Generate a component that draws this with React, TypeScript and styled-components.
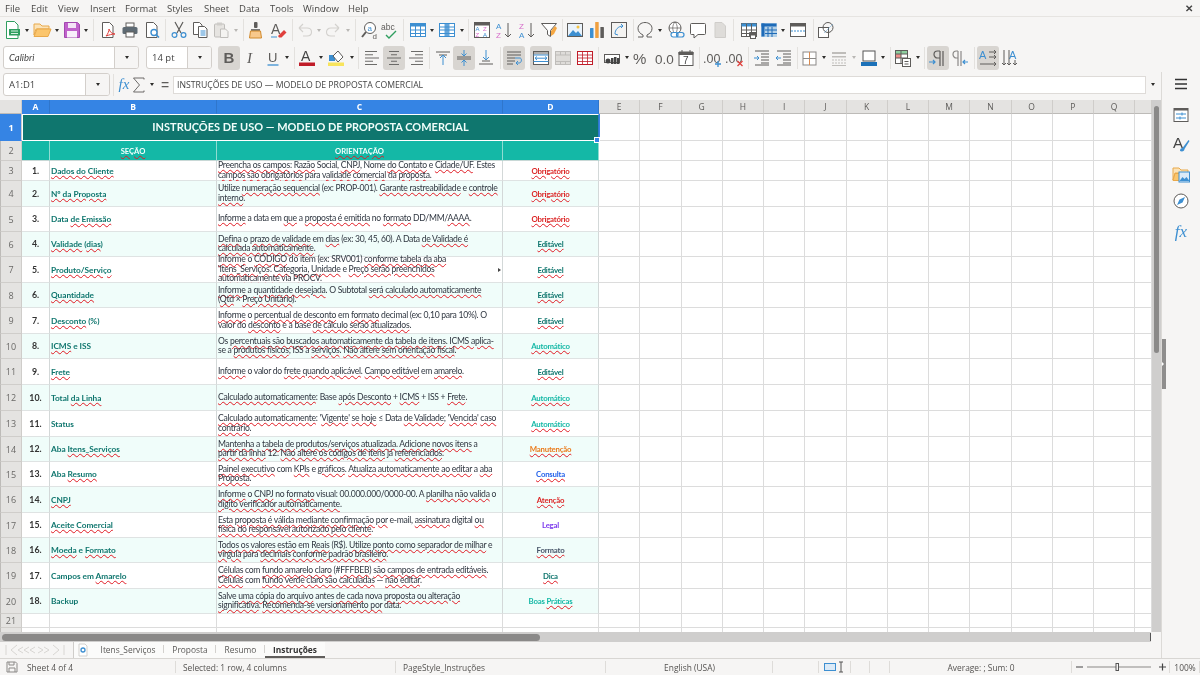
import React from 'react';
import styled, { createGlobalStyle } from 'styled-components';

const UI = '"Open Sans", "Noto Sans", sans-serif';
const CELL = 'Lato, "Liberation Sans", sans-serif';
const G = '#5e5c5a';
const L = '#3d8fd1';

const Global = createGlobalStyle`
  html, body { margin: 0; padding: 0; background: #f6f5f4; overflow: hidden; }
  #root { width: 1200px; height: 675px; }
`;
const Page = styled.div`
  width: 1200px; height: 675px; display: flex; flex-direction: column; overflow: hidden;
  background: #f6f5f4; font-family: ${UI}; color: #3d3c3a; filter: blur(0.3px);
`;
const MenuBar = styled.div`
  height: 16px; display: flex; align-items: center; border-bottom: 1px solid #e6e4e1; position: relative;
  flex: none; font-size: 9.5px;
`;
const MenuItem = styled.span<{ $w: number }>`
  width: ${p => p.$w}px; flex: none; text-align: left; white-space: nowrap; color: #4a4947;
  &:first-child { margin-left: 5px; }
`;
const CloseMark = styled.span`
  margin-left: auto; margin-right: 7px; font-size: 10px; font-weight: 700; color: #444;
`;
const Toolbar = styled.div<{ $h: number; $pad: number }>`
  height: ${p => p.$h}px; padding-left: ${p => p.$pad}px; display: flex; align-items: center; flex: none;
`;
const Slot = styled.div<{ $w: number; $on?: boolean }>`
  width: ${p => p.$w}px; height: 24px; flex: none; display: flex; align-items: center; justify-content: center;
  border-radius: 3px; background: ${p => (p.$on ? '#d8d5d1' : 'transparent')};
`;
const Caret = styled.i<{ $off?: boolean }>`
  display: block; width: 0; height: 0; border-left: 2.5px solid transparent; border-right: 2.5px solid transparent;
  border-top: 3px solid ${p => (p.$off ? '#b9b7b4' : '#2e2d2b')};
`;
const Divider = styled.i`
  display: block; width: 1px; height: 22px; background: #e3e1de;
`;
const ToolIcon = styled.svg`
  width: 18px; height: 18px; flex: none; overflow: visible;
`;
const Combo = styled.div<{ $w: number; $gap?: number }>`
  width: ${p => p.$w}px; height: 23px; margin-right: ${p => p.$gap || 0}px; flex: none; box-sizing: border-box;
  display: flex; background: #fff; border: 1px solid #d3cfcb; border-radius: 3px; overflow: hidden;
`;
const ComboText = styled.span<{ $italic?: boolean; $font?: string }>`
  flex: 1; display: flex; align-items: center; padding-left: 5px; font-size: 9.5px; color: #444;
  font-style: ${p => (p.$italic ? 'italic' : 'normal')}; font-family: ${p => p.$font || UI};
`;
const ComboButton = styled.span`
  width: 23px; flex: none; border-left: 1px solid #d3cfcb; background: #f6f5f4;
  display: flex; align-items: center; justify-content: center;
`;
const Middle = styled.div`
  flex: none; height: 586px; display: flex;
`;
const Workspace = styled.div`
  width: 1161px; flex: none; display: flex; flex-direction: column;
`;
const FormulaBar = styled.div`
  height: 28px; flex: none; display: flex; align-items: center; padding-left: 3px; box-sizing: border-box; padding-bottom: 3px;
`;
const FormulaSlot = styled.div<{ $w: number }>`
  width: ${p => p.$w}px; flex: none; display: flex; align-items: center; justify-content: center; height: 22px;
`;
const FxText = styled.span<{ $size: number }>`
  font-family: "Liberation Serif", serif; font-style: italic; font-size: ${p => p.$size}px; color: ${L}; line-height: 1;
`;
const FormulaInput = styled.div`
  width: 973px; height: 18px; flex: none; box-sizing: border-box; background: #fff; border: 1px solid #dedbd8;
  font-size: 8.7px; line-height: 16px; padding-left: 3px; color: #444; white-space: nowrap;
`;
const SumMark = styled.span`
  font-family: "Liberation Sans", sans-serif; font-size: 14px; color: #5e5c5a; line-height: 1;
`;
const SheetRow = styled.div`
  height: 532px; flex: none; display: flex;
`;
const Sheet = styled.div`
  width: 1152px; height: 532px; flex: none; overflow: hidden; display: grid;
  grid-template-columns: 22px 28px 167px 286px 96px repeat(13, 41.25px) 17px;
  grid-template-rows: 14px 27px 20px 20px 26px 25px 25px 26px 25px 26px 25px 26px 26px 26px 25px 25px 26px 25px 25px 26px 25px 14px 14px;
  background: #fff;
`;
const Corner = styled.div`
  background: #e4e3e1; border-right: 1px solid #cfcdca; border-bottom: 1px solid #bdbbb8;
`;
const ColHead = styled.div<{ $on?: boolean }>`
  display: flex; align-items: center; justify-content: center; font-size: 8.5px; box-sizing: border-box;
  font-weight: ${p => (p.$on ? 700 : 400)}; color: ${p => (p.$on ? '#fff' : '#5c5b59')};
  background: ${p => (p.$on ? '#3584e4' : '#e4e3e1')};
  border-right: 1px solid ${p => (p.$on ? '#2f76cc' : '#cfcdca')};
  border-bottom: 1px solid ${p => (p.$on ? '#3584e4' : '#bdbbb8')};
`;
const RowHead = styled.div<{ $on?: boolean }>`
  display: flex; align-items: center; justify-content: center; font-size: 9px; box-sizing: border-box;
  font-weight: ${p => (p.$on ? 700 : 400)}; color: ${p => (p.$on ? '#fff' : '#6a6967')};
  background: ${p => (p.$on ? '#3584e4' : '#e4e3e1')};
  border-left: 1px solid ${p => (p.$on ? '#3584e4' : '#bdbbb8')};
  border-right: 1px solid #cfcdca; border-bottom: 1px solid ${p => (p.$on ? '#3584e4' : '#cfcdca')};
`;
const Blank = styled.div`
  box-sizing: border-box; border-right: 1px solid #dcdcdc; border-bottom: 1px solid #dcdcdc; background: #fff;
`;
const TitleCell = styled.div`
  grid-column: 2 / span 4; position: relative; box-sizing: border-box; display: flex; align-items: center; justify-content: center;
  background: #0f766e; color: #f0fdfa; font-family: ${CELL}; font-weight: 700; font-size: 10.98px; padding-bottom: 2px;
  border: 1px solid #fff; border-right: 1px solid #2f76cc; box-shadow: 1px 0 0 #3584e4; white-space: nowrap;
`;
const Handle = styled.i`
  position: absolute; right: -2px; bottom: -3px; width: 4px; height: 4px; background: #3584e4; border: 1px solid #fff; z-index: 2;
`;
const HeadCell = styled.div`
  background: #14b8a6; color: #f4fffd; font-family: ${CELL}; font-weight: 700; font-size: 7.6px; display: flex; align-items: center;
  justify-content: center; box-sizing: border-box; border-right: 1px solid #8fdcd2; border-bottom: 1px solid #c8d8d6;
`;
const DataCell = styled.div<{ $alt: boolean; $mode: 'num' | 'sec' | 'text' | 'tag'; $color?: string }>`
  position: relative; box-sizing: border-box; display: flex; flex-direction: column; justify-content: center;
  background: ${p => (p.$alt ? '#f0fdfa' : '#fff')};
  border-right: 1px solid #d3d8d8; border-bottom: 1px solid #dfe3e3;
  font-family: ${CELL}; white-space: nowrap; overflow: visible;
  font-size: ${p => (p.$mode === 'text' ? '8.6px' : p.$mode === 'num' ? '8.8px' : p.$mode === 'tag' ? '7.8px' : '8.3px')};
  letter-spacing: ${p => (p.$mode === 'text' ? '-0.28px' : p.$mode === 'tag' ? '-0.2px' : p.$mode === 'sec' ? '-0.04px' : '0')};
  line-height: ${p => (p.$mode === 'text' ? '9.4px' : '12px')};
  font-weight: ${p => (p.$mode === 'text' ? 400 : 700)};
  color: ${p => p.$color || '#333'};
  text-align: ${p => (p.$mode === 'num' || p.$mode === 'tag' ? 'center' : 'left')};
  padding-left: ${p => (p.$mode === 'text' || p.$mode === 'sec' ? '1px' : '0')};
`;
const Line = styled.span`
  display: block;
`;
const Wave = styled.span`
  text-decoration: underline wavy #e01b24 0.8px; text-underline-offset: 0.5px;
`;
const Overflow = styled.i`
  position: absolute; right: 1px; top: 11px; width: 0; height: 0; border-top: 2.5px solid transparent;
  border-bottom: 2.5px solid transparent; border-left: 3px solid #444;
`;
const VScroll = styled.div`
  width: 9px; flex: none; background: #cfcecd; position: relative; display: flex; flex-direction: column; align-items: center;
`;
const VThumb = styled.div`
  width: 5px; height: 247px; margin-top: 6px; background: #8a8988; border-radius: 3px;
`;
const HScrollRow = styled.div`
  height: 10px; flex: none; width: 1151px; background: #cfcecd; display: flex; align-items: center; justify-content: space-between;
`;
const HThumb = styled.div`
  width: 538px; height: 7px; margin-left: 2px; background: #8a8988; border-radius: 4px;
`;
const HMark = styled.i`
  width: 1px; height: 8px; background: #555;
`;
const TabRow = styled.div`
  height: 16px; flex: none; display: flex; align-items: stretch; font-size: 8.4px;
`;
const TabNav = styled.div`
  width: 74px; flex: none; display: flex; align-items: center; padding-left: 5px; box-sizing: border-box;
  border-right: 1px solid #cfcdca;
`;
const NavIcon = styled.svg`
  width: 60px; height: 12px; flex: none;
`;
const NewTab = styled.div`
  width: 18px; flex: none; display: flex; align-items: center; justify-content: center; background: #fbfbfa;
`;
const Tab = styled.div<{ $w: number; $on?: boolean; $last?: boolean }>`
  width: ${p => p.$w}px; flex: none; display: flex; align-items: center; justify-content: center; box-sizing: border-box;
  background: #fbfbfa; font-weight: ${p => (p.$on ? 700 : 400)}; color: ${p => (p.$on ? '#333' : '#5a5957')};
  border-bottom: 2px solid ${p => (p.$on ? '#605e5c' : 'transparent')};
  position: relative;
  &::after { content: ''; display: ${p => (p.$last ? 'none' : 'block')}; position: absolute; right: 0; top: 3px; bottom: 3px; width: 1px; background: #d3d1ce; }
`;
const Sidebar = styled.div`
  width: 39px; flex: none; border-left: 1px solid #dcdad7; box-sizing: border-box; position: relative; display: flex; flex-direction: column;
`;
const SideItem = styled.div<{ $h: number }>`
  height: ${p => p.$h}px; flex: none; display: flex; align-items: center; justify-content: center;
`;
const SideHandle = styled.div`
  position: absolute; left: 0; top: 267px; width: 4px; height: 50px; background: #8f8e8d; display: flex; align-items: center;
  &::after { content: ''; width: 0; height: 0; border-top: 2px solid transparent; border-bottom: 2px solid transparent; border-left: 2.5px solid #fff; }
`;
const StatusBar = styled.div`
  height: 17px; flex: none; box-sizing: border-box; border-top: 1px solid #d8d6d3; display: flex; font-size: 8.4px; color: #555351;
`;
const StatusCell = styled.div<{ $w: number; $center?: boolean; $pad?: number }>`
  width: ${p => p.$w}px; flex: none; box-sizing: border-box; display: flex; align-items: center; white-space: nowrap;
  justify-content: ${p => (p.$center ? 'center' : 'flex-start')}; padding-left: ${p => p.$pad || 0}px;
  position: relative;
  &::after { content: ''; position: absolute; right: 0; top: 2px; bottom: 2px; width: 1px; background: #dedcd9; }
`;
const StatusIcon = styled.svg<{ $m?: number }>`
  flex: none; margin-right: ${p => p.$m || 0}px;
`;

const T = ({ x, y, s, c, b, i, f = 'Liberation Sans', children }: any) => (
  <text x={x} y={y} fontSize={s} fill={c} fontWeight={b ? 700 : 400} fontStyle={i ? 'italic' : 'normal'} fontFamily={f}>{children}</text>
);
const lines = (ys: number[], x1 = 2, x2 = 16, c = G) => <path d={ys.map(y => `M${x1} ${y}H${x2}`).join('')} stroke={c} fill="none" />;
const tbl = (c = L, h = L) => (
  <>
    <rect x="1.5" y="2.5" width="15" height="13" fill="#fff" stroke={c} />
    <rect x="1.5" y="2.5" width="15" height="3" fill={h} />
    <path d="M1.5 9h15M1.5 12.5h15M6.5 3v12.5M11.5 3v12.5" stroke={c} fill="none" />
  </>
);
const aligned = (segs: [number, number][]) => (
  <path d={segs.map(([a, b], i) => `M${a} ${2.5 + i * 3.25}H${b}`).join('')} stroke={G} strokeWidth=".9" fill="none" />
);

const icons: Record<string, React.ReactNode> = {
  new: <><path d="M3.5 .5h8l3.5 3.5v13.5h-11.5z" fill="#fff" stroke="#2f9e5f" /><path d="M6 8h11v6.5H6z" fill="#2f9e5f" /><path d="M8 10h7M8 12.5h7" stroke="#d8f1e2" /></>,
  open: <><path d="M1 14V3h6l2 2h7v3H3z" fill="#fbe3b8" stroke="#e9a94a" /><path d="M1 15.5l3-7.5h14l-3 7.5z" fill="#fbc56c" stroke="#e9a94a" /></>,
  save: <><path d="M1.5 1.5h13l2 2v13h-15z" fill="#c061cb" stroke="#a347af" /><rect x="5" y="2" width="8" height="5" fill="#f4e3f6" /><rect x="4" y="10" width="10" height="6.5" fill="#f8eefa" /></>,
  pdf: <><path d="M3.5 1.5h7l3.5 3.5v11.5h-10.5z" fill="#fff" stroke={G} /><path d="M7 15c2-2 3-5 3-7 1 3 3 5 6 5-3 0-6 1-9 2z" fill="none" stroke="#e0403c" /></>,
  print: <><rect x="5" y="2" width="8" height="4" fill="#fff" stroke={G} /><rect x="1.5" y="6" width="15" height="7" rx="1.5" fill="#5e6a73" /><rect x="5" y="11" width="8" height="5" fill="#fff" stroke={G} /></>,
  preview: <><path d="M3.5 1.5h7l3.5 3.5v11.5h-10.5z" fill="#fff" stroke={G} /><circle cx="11" cy="11.5" r="3" fill="#fff" stroke={L} strokeWidth="1.4" /><path d="M13 13.5l3 3" stroke={L} strokeWidth="1.6" /></>,
  cut: <><path d="M5 1l6 11M13 1l-6 11" stroke={G} strokeWidth="1.2" /><circle cx="4.5" cy="14" r="2.4" fill="none" stroke={L} strokeWidth="1.2" /><circle cx="13.5" cy="14" r="2.4" fill="none" stroke={L} strokeWidth="1.2" /></>,
  copy: <><path d="M2.5 1.5h6l2.5 2.5v9.5h-8.5z" fill="#fff" stroke={G} /><path d="M7.5 5.5h6l2.5 2.5v8.5h-8.5z" fill="#fff" stroke={G} /><path d="M9.5 10h5M9.5 12h5M9.5 14h5" stroke={L} /></>,
  paste: <><rect x="2.5" y="3" width="10" height="13" rx="1" fill="#e6e4e1" stroke="#bfbdba" /><rect x="5" y="1.5" width="5" height="3" fill="#cfcdca" /><path d="M8.5 8h5l2.5 2.5v6h-7.5z" fill="#f4f3f1" stroke="#bfbdba" /></>,
  clone: <><rect x="7" y="1" width="3.5" height="6" rx="1" fill={G} /><path d="M4 8h9v2H4z" fill="#777" /><path d="M3.5 10h10l1 7h-12z" fill="#f8c88c" stroke="#d18a2c" /></>,
  clear: <><T x="2" y="13" s="14" c={G}>A</T><path d="M9 15l6-6 2.5 2.5-5 5H10z" fill="#e0403c" /><path d="M2 16h6" stroke={L} /></>,
  undo: <path d="M3 7l4-4M3 7l4 4M3 7h8c6 0 6 8 0 8H7" fill="none" stroke="#d3d1ce" strokeWidth="1.1" />,
  redo: <path d="M15 7l-4-4M15 7l-4 4M15 7H7c-6 0-6 8 0 8h4" fill="none" stroke="#d3d1ce" strokeWidth="1.1" />,
  find: <><circle cx="10" cy="7" r="5.5" fill="#fff" stroke={G} /><T x="7.4" y="9.5" s="8" c={L}>a</T><path d="M6 11l-4 5" stroke={G} strokeWidth="2" /><T x="12.5" y="18" s="8" c={G}>d</T></>,
  spell: <><T x="0" y="9" s="8.5" c={G}>abc</T><path d="M5 14l3 3 7-7" fill="none" stroke="#2f9e5f" strokeWidth="1.4" /></>,
  rows: tbl(),
  cols: <><rect x="1.5" y="2.5" width="15" height="13" fill="#fff" stroke={L} /><rect x="6.5" y="2.5" width="5" height="13" fill={L} opacity=".8" /><path d="M1.5 6h15M1.5 9h15M1.5 12.5h15" stroke={L} /></>,
  sort: <><rect x="1.5" y="1.5" width="15" height="15" fill="#fff" stroke={G} /><rect x="1.5" y="1.5" width="15" height="3" fill={G} /><T x="2.5" y="10" s="6" c={L}>A</T><T x="2.5" y="16" s="6" c="#d66bc9">Z</T><T x="10" y="10" s="6" c="#d66bc9">Z</T><T x="10" y="16" s="6" c={L}>A</T></>,
  asc: <><T x="0" y="8" s="8" c={L}>A</T><T x="0" y="17" s="8" c="#d66bc9">Z</T><path d="M12 2v14M9 13l3 3 3-3" fill="none" stroke={G} /></>,
  desc: <><T x="0" y="8" s="8" c="#d66bc9">Z</T><T x="0" y="17" s="8" c={L}>A</T><path d="M12 2v14M9 13l3 3 3-3" fill="none" stroke={G} /></>,
  filter: <><path d="M1.5 2.5h15l-6 7v6l-3-2v-4z" fill="#fff" stroke={G} /><path d="M11 10l4-5 2 2-3 6-3 2z" fill="#f5a742" /></>,
  image: <><rect x="1.5" y="2.5" width="15" height="13" fill="#eaf3fb" stroke={G} /><path d="M2 15l5-6 3 3 2-2 4 5z" fill={L} /><circle cx="12" cy="6" r="1.5" fill="#f5c242" /></>,
  chart: <><rect x="2" y="7" width="3.5" height="10" rx=".5" fill={L} /><rect x="7.2" y="1" width="3.5" height="16" rx=".5" fill="#f0a040" /><rect x="12.4" y="6" width="3.5" height="11" rx=".5" fill={G} /></>,
  pivot: <><rect x="1.5" y="1.5" width="15" height="15" fill="#f4f3f1" stroke={G} /><path d="M5 13c0-4 3-8 8-8M11 3l2 2-2 2M5 13l3 1" fill="none" stroke={L} /></>,
  omega: <path d="M2 16h5v-2C4 12.5 2 10.5 2 7.5 2 4 5 1.5 9 1.5s7 2.5 7 6c0 3-2 5-5 6.5V16h5" fill="none" stroke={G} />,
  link: <><circle cx="8" cy="7" r="6" fill="#fff" stroke={G} /><path d="M2 7h12M8 1c-3 3-3 9 0 12M8 1c3 3 3 9 0 12" stroke={G} fill="none" strokeWidth=".7" /><rect x="4" y="11.5" width="7" height="4.5" rx="2.2" fill="#fff" stroke={L} strokeWidth="1.2" /><rect x="9.5" y="11.5" width="7.5" height="4.5" rx="2.2" fill="none" stroke={L} strokeWidth="1.2" /></>,
  comment: <path d="M2.5 2.5h13a1 1 0 0 1 1 1v9a1 1 0 0 1-1 1H9l-4 3.5v-3.5H2.5a1 1 0 0 1-1-1v-9a1 1 0 0 1 1-1z" fill="#fff" stroke={G} />,
  header: <path d="M4 1.5h7l3.5 3.500v11.500H4z" fill="#dedcd9" stroke="#cfcdca" />,
  area: <>{tbl(G, L)}<rect x="9" y="11" width="8" height="5" rx="1" fill={G} /><rect x="10.5" y="14" width="5" height="3.5" fill="#fff" stroke={G} /></>,
  freeze: <><rect x="1.5" y="2.5" width="15" height="13" fill="#3d8fd1" opacity=".35" stroke={L} /><rect x="1.5" y="2.5" width="15" height="3" fill="#1e6bb8" /><rect x="1.5" y="2.5" width="3" height="13" fill="#1e6bb8" /><path d="M8 6v10M12 6v10M5 9h12M5 12.5h12" stroke="#1e6bb8" /></>,
  split: <><rect x="1.5" y="2.5" width="15" height="13" fill="#fff" stroke={G} /><rect x="1.5" y="2.5" width="15" height="3" fill={G} /><path d="M2 10h14" stroke={L} strokeDasharray="2 1" /></>,
  shapes: <><rect x="1.5" y="6.5" width="10" height="10" fill="#fff" stroke={G} /><circle cx="11" cy="6.5" r="5" fill="none" stroke={G} /><path d="M7 12l9-9" stroke={L} strokeWidth=".4" /></>,
  sum: <path d="M14 3.5V2H3.500l6 7-6 7H14v-1.500" fill="none" stroke={G} strokeWidth=".9" />,

  bold: <T x="3.5" y="14" s="15" b c={G}>B</T>,
  italic: <T x="5" y="14" s="15" i c={G} f="Liberation Serif">I</T>,
  under: <><T x="4" y="13" s="13" c={G}>U</T><path d="M3.5 16h11" stroke={L} strokeWidth="1.3" /></>,
  fcolor: <><T x="3" y="12" s="14" c="#444">A</T><rect x="1" y="13.5" width="16" height="3.5" fill="#c01c28" /></>,
  bg: <><rect x="2" y="6" width="6" height="6" fill={L} /><path d="M6 7l5-5 5 6-5 5z" fill="#fff" stroke={G} /><rect x="1" y="13.5" width="16" height="3.5" fill="#f8e45c" /></>,
  left: aligned([[2, 14], [2, 10], [2, 16], [2, 10], [2, 14]]),
  center: aligned([[4, 14], [6, 12], [2, 16], [6, 12], [4, 14]]),
  right: aligned([[4, 16], [8, 16], [2, 16], [8, 16], [4, 16]]),
  top: <>{lines([3], 2, 16)}{lines([6], 5, 13)}<path d="M9 6v10M6 9l3-3 3 3" stroke={L} fill="none" /></>,
  vcenter: <>{lines([8, 10], 2, 16)}<path d="M9 1v6M6.5 4.5L9 7l2.500-2.500M9 17v-6M6.5 13.5L9 11l2.500 2.500" stroke={L} fill="none" /></>,
  bottom: <>{lines([12], 5, 13)}{lines([15], 2, 16)}<path d="M9 1v10M6 8l3 3 3-3" stroke={L} fill="none" /></>,
  wrap: <>{lines([3, 6], 2, 16)}{lines([9, 12], 2, 10)}{lines([15], 2, 8)}<path d="M10 9h5c2 0 2 5-1 5h-3M13 12l-2 2 2 2" stroke={L} fill="none" /></>,
  merge: <><rect x="1.5" y="2.5" width="15" height="13" fill="#fff" stroke={G} /><rect x="1.5" y="2.5" width="15" height="3" fill={G} opacity=".5" /><path d="M1.5 6h15M1.5 12.5h15" stroke={L} /><path d="M3 9.200h12M5 7.500L3 9.200 5 11M13 7.500l2 1.700-2 1.800" stroke={L} fill="none" /></>,
  merge2: <><rect x="1.5" y="2.5" width="15" height="13" fill="#dedcd9" stroke="#bfbdba" /><path d="M1.5 6h15M1.5 12.5h15M6.5 2.5v3.500M11.5 2.5v3.500M6.5 12.5v3M11.5 12.5v3" stroke="#bfbdba" /></>,
  unmerge: <><rect x="1.5" y="2.5" width="15" height="13" fill="#fff" stroke="#c01c28" /><path d="M1.5 6h15M1.5 9h15M1.5 12.5h15M6.5 2.5v13M11.5 2.5v13" stroke="#c01c28" strokeWidth=".8" /></>,
  currency: <><rect x="1.5" y="5.5" width="15" height="8" fill="#fff" stroke={G} /><rect x="8" y="9" width="2.5" height="6" fill="#444" /><rect x="11" y="8" width="2.5" height="7" fill="#444" /><rect x="14" y="9" width="2.5" height="6" fill="#444" /><circle cx="5" cy="12" r="2.5" fill="#444" /></>,
  percent: <T x="1" y="15" s="15" c={G}>%</T>,
  number: <T x="0" y="14.5" s="13.5" c={G}>0.0</T>,
  date: <><rect x="2" y="3.5" width="14" height="13" fill="#fff" stroke={G} /><path d="M2 3h14v2.500H2zM5 1v3M13 1v3" stroke={G} fill={G} /><T x="6" y="15" s="10" c="#444">7</T></>,
  adddec: <><T x="-1" y="14" s="12.5" c={G}>.00</T><path d="M14 12v6M11 15h6" stroke={L} strokeWidth="1.3" /></>,
  deldec: <><T x="-1" y="14" s="12.5" c={G}>.00</T><path d="M11.5 12l5 5M16.500 12l-5 5" stroke="#e0403c" strokeWidth="1.3" /></>,
  indent: <>{lines([2, 16], 2, 16)}{lines([5, 8, 11, 14], 8, 16)}<path d="M1 9h5M4 7l2 2-2 2" stroke={L} fill="none" /></>,
  dedent: <>{lines([2, 16], 2, 16)}{lines([5, 8, 11, 14], 8, 16)}<path d="M1 9h5M3 7L1 9l2 2" stroke={L} fill="none" /></>,
  border: <><rect x="2" y="3" width="13" height="13" fill="#fff" stroke="#8b8987" /><path d="M8.5 3v13" stroke="#d98a50" /><path d="M2 9.500h13" stroke="#8b8987" /></>,
  bstyle: <><path d="M2 3h14v2H2zM2 7h14v1.500H2z" fill="#bfbdba" /><path d="M2 11h14M2 14h14" stroke="#bfbdba" strokeDasharray="2 1" /><path d="M2 16.500h14" stroke="#bfbdba" /></>,
  bcolor: <><rect x="3" y="2" width="12" height="10" fill="#fff" stroke="#555" /><path d="M1 13h16v4H1z" fill="#1c71b8" /></>,
  cond: <><rect x="1.5" y="1.5" width="12" height="13" fill="#fff" stroke={G} /><rect x="2" y="2" width="11" height="3" fill="#8ecf9f" /><rect x="2" y="5" width="5" height="4" fill="#ee8f8a" /><path d="M1.5 5h12M1.5 9h12M7 2v12" stroke={G} fill="none" /><rect x="8.5" y="9.5" width="8" height="8" fill="#fff" stroke={G} /><path d="M10.5 12.500h4M10.5 15h4" stroke={G} /></>,
  ltr: <><path d="M14 2v15M11 2v15M11 2H8.500a3.500 3.500 0 0 0 0 7H11" fill="none" stroke={G} strokeWidth="1.2" /><path d="M0 13h6M4 11l2 2-2 2" fill="none" stroke={L} strokeWidth="1.2" /></>,
  rtl: <><path d="M7 2v15M10 2v15M7 2H5.500a3.500 3.500 0 0 0 0 7H7" fill="none" stroke="#8b8987" strokeWidth="1.2" /><path d="M17 13h-5M14 11l-2 2 2 2" fill="none" stroke={L} strokeWidth="1.2" /></>,
  tbh: <><T x="0" y="10" s="11" c={L}>A</T><path d="M10 3h7M15 1l2 2-2 2M10 8h7M15 6l2 2-2 2M1 15h16M15 13l2 2-2 2" fill="none" stroke={G} /></>,
  tbv: <><T x="8" y="10" s="11" c={L}>A</T><path d="M2 1v15M4 14l-2 2-2-2M7 1v15M9 14l-2 2-2-2M13 11v5M15 14l-2 2-2-2" transform="translate(1 0)" fill="none" stroke={G} /></>,
  menu: <path d="M3 4.5h12M3 9h12M3 13.5h12" stroke="#333" strokeWidth="1.5" />,
  props: <><rect x="2" y="2.5" width="14" height="13" fill="#fff" stroke={G} /><rect x="2" y="2.5" width="14" height="2" fill={G} /><path d="M4 8h10M4 12h10" stroke={L} /><path d="M10 6.500v3M8 10.500v3" stroke={L} /></>,
  styles: <><T x="1" y="13" s="15" c="#444">A</T><path d="M8 16c0-2 1-3 2.500-3l6-8 1 1-5 8c0 2-2 3-4.500 2z" fill={L} /></>,
  gallery: <><path d="M1 15V3h6l2 2h7v3H3z" fill="#fbe3b8" stroke="#e9a94a" /><path d="M1 15.500l2-7h14v7z" fill="#fbc56c" stroke="#e9a94a" /><rect x="7" y="7" width="10.500" height="10" fill="#dbeaf7" stroke={L} /><path d="M7.500 16l3-4 2 2 2-2 3 4z" fill={L} /></>,
  nav: <><circle cx="9" cy="9" r="7" fill="#fff" stroke={G} /><path d="M13 5L10.500 10.500 5 13 7.500 7.500z" fill={L} /></>,
};

const I = ({ n }: { n: string }) => <ToolIcon viewBox="0 0 18 18">{icons[n]}</ToolIcon>;

type Item = [string, number, number?];
const row1: Item[] = [
  ['new', 22], ['d', 8], ['open', 22], ['d', 8], ['save', 21], ['d', 8], ['s', 7], ['pdf', 22], ['print', 22], ['preview', 22], ['s', 5],
  ['cut', 21], ['copy', 22], ['paste', 19], ['o', 12], ['s', 3], ['clone', 22], ['clear', 22], ['s', 6], ['undo', 20], ['o', 8], ['redo', 20], ['o', 10], ['s', 4],
  ['find', 24], ['spell', 18], ['s', 9], ['rows', 20], ['d', 8], ['cols', 22], ['d', 7], ['s', 7], ['sort', 20], ['asc', 26], ['desc', 20], ['filter', 22], ['s', 4],
  ['image', 22], ['chart', 22], ['pivot', 22], ['s', 6], ['omega', 18], ['d', 12], ['link', 20], ['comment', 24], ['header', 20], ['s', 6],
  ['area', 26], ['freeze', 14], ['d', 14], ['split', 16], ['s', 14], ['shapes', 12],
];
const row2: Item[] = [
  ['bold', 22, 1], ['italic', 22], ['under', 21], ['d', 8], ['s', 6], ['fcolor', 20], ['d', 8], ['bg', 22], ['d', 9], ['s', 5],
  ['left', 22], ['center', 22, 1], ['right', 22], ['s', 5], ['top', 21], ['vcenter', 22, 1], ['bottom', 22], ['s', 6], ['wrap', 22, 1], ['x', 5], ['merge', 22, 1], ['merge2', 22], ['unmerge', 22], ['s', 5],
  ['currency', 22], ['d', 7], ['percent', 22], ['number', 23], ['date', 22], ['s', 5], ['adddec', 22], ['deldec', 22], ['s', 5], ['indent', 22], ['dedent', 22], ['s', 5],
  ['border', 19], ['d', 10], ['bstyle', 20], ['o', 10], ['bcolor', 19], ['d', 10], ['s', 4], ['cond', 22], ['d', 8], ['s', 5], ['ltr', 22, 1], ['rtl', 22], ['s', 6], ['tbh', 22, 1], ['tbv', 22],
];
const renderItems = (items: Item[]) =>
  items.map(([n, w, on], i) => (
    <Slot key={i} $w={w} $on={!!on}>
      {n === 'd' ? <Caret /> : n === 'o' ? <Caret $off /> : n === 's' ? <Divider /> : n === 'x' ? null : <I n={n} />}
    </Slot>
  ));

const Rich = ({ text }: { text: string }) => (
  <>
    {text.split(/(\{[^}]*\})/).map((p, i) =>
      p.startsWith('{') ? <Wave key={i}>{p.slice(1, -1)}</Wave> : <React.Fragment key={i}>{p}</React.Fragment>
    )}
  </>
);

const RED = '#dc2626', TEAL = '#0f766e', AQUA = '#14b8a6';
const data: [string, string[], string, string][] = [
  ['{Dados do Cliente}', ['{Preencha os campos}: {Razão} Social, {CNPJ}, Nome {do Contato} e {Cidade/UF}. Estes', '{campos são obrigatórios} para {validade comercial} da {proposta}.'], '{Obrigatório}', RED],
  ['{Nº da Proposta}', ['Utilize {numeração sequencial} (ex: PROP-001). {Garante rastreabilidade} e {controle}', '{interno}.'], '{Obrigatório}', RED],
  ['Data {de Emissão}', ['{Informe} a data em {que} a {proposta é emitida} no {formato} DD/MM/{AAAA}.'], '{Obrigatório}', RED],
  ['{Validade} ({dias})', ['{Defina} o {prazo de validade} em {dias} (ex: 30, 45, 60). A Data {de Validade é}', '{calculada automaticamente}.'], '{Editável}', TEAL],
  ['{Produto/Serviço}', ['{Informe} o {CÓDIGO} do item (ex: SRV001) {conforme tabela da aba}', "'{Itens_Serviços}'. {Categoria}, {Unidade} e {Preço serão preenchidos}", '{automaticamente} via {PROCV}.'], '{Editável}', TEAL],
  ['{Quantidade}', ['{Informe} a {quantidade desejada}. O Subtotal {será calculado automaticamente}', '({Qtd} × {Preço Unitário}).'], '{Editável}', TEAL],
  ['{Desconto} (%)', ['{Informe} o {percentual de desconto} em {formato} decimal (ex: 0,10 para 10%). O', 'valor do {desconto} e a base {de cálculo serão atualizados}.'], '{Editável}', TEAL],
  ['{ICMS} e ISS', ['Os {percentuais são buscados automaticamente da tabela de itens}. {ICMS aplica-}', 'se a {produtos físicos}; ISS a {serviços}. {Não altere sem orientação fiscal}.'], '{Automático}', AQUA],
  ['{Frete}', ['{Informe} o valor do {frete quando aplicável}. {Campo editável} em {amarelo}.'], '{Editável}', TEAL],
  ['Total {da Linha}', ['{Calculado automaticamente}: Base {após Desconto} + {ICMS} + ISS + {Frete}.'], '{Automático}', AQUA],
  ['Status', ["{Calculado automaticamente}: '{Vigente}' {se hoje} ≤ Data {de Validade}; '{Vencida}' {caso}", '{contrário}.'], '{Automático}', AQUA],
  ['Aba {Itens_Serviços}', ['{Mantenha} a {tabela de produtos/serviços atualizada}. {Adicione novos itens} a', '{partir da linha} 12. {Não altere os códigos de itens} já {referenciados}.'], '{Manutenção}', '#ea7a1a'],
  ['Aba {Resumo}', ['{Painel executivo} com {KPIs} e {gráficos}. {Atualiza automaticamente ao editar} a {aba}', '{Proposta}.'], '{Consulta}', '#2563eb'],
  ['{CNPJ}', ['{Informe} o {CNPJ} no {formato} visual: 00.000.000/0000-00. A {planilha não valida} o', '{dígito verificador automaticamente}.'], '{Atenção}', RED],
  ['{Aceite Comercial}', ['{Esta proposta é válida mediante confirmação por} e-mail, {assinatura} digital {ou}', '{física do responsável autorizado pelo cliente}.'], 'Legal', '#7c3aed'],
  ['{Moeda} e {Formato}', ['{Todos os valores estão} em {Reais} (R$). {Utilize ponto como separador de milhar} e', '{vírgula} para {decimais conforme padrão brasileiro}.'], '{Formato}', '#475569'],
  ['Campos em {Amarelo}', ['{Células} com {fundo amarelo claro} (#{FFFBEB}) {são campos de entrada editáveis}.', '{Células} com {fundo verde claro são calculadas} — {não editar}.'], '{Dica}', TEAL],
  ['Backup', ['Salve {uma cópia do arquivo} antes {de cada} nova {proposta ou alteração}', '{significativa}. {Recomenda-se versionamento por} data.'], 'Boas {Práticas}', AQUA],
];

const columns = 'A B C D E F G H I J K L M N O P Q'.split(' ');
const tail = (n: number) => Array.from({ length: n }, (_, i) => <Blank key={i} />);

const menu: [string, number][] = [['File', 26], ['Edit', 27], ['View', 32], ['Insert', 35], ['Format', 42], ['Styles', 37], ['Sheet', 35], ['Data', 31], ['Tools', 33], ['Window', 45], ['Help', 30]];

export default function App() {
  return (
    <Page>
      <Global />
      <MenuBar>
        {menu.map(([m, w]) => <MenuItem key={m} $w={w}>{m}</MenuItem>)}
        <CloseMark>✕</CloseMark>
      </MenuBar>
      <Toolbar $h={26} $pad={1}>{renderItems(row1)}</Toolbar>
      <Toolbar $h={29} $pad={3}>
        <Combo $w={136} $gap={7}>
          <ComboText $italic $font={CELL}>Calibri</ComboText>
          <ComboButton><Caret /></ComboButton>
        </Combo>
        <Combo $w={66} $gap={6}>
          <ComboText>14 pt</ComboText>
          <ComboButton><Caret /></ComboButton>
        </Combo>
        {renderItems(row2)}
      </Toolbar>
      <Middle>
        <Workspace>
          <FormulaBar>
            <Combo $w={107} $gap={0}>
              <ComboText>A1:D1</ComboText>
              <ComboButton><Caret /></ComboButton>
            </Combo>
            <FormulaSlot $w={7}><Divider /></FormulaSlot>
            <FormulaSlot $w={14}><FxText $size={15}>fx</FxText></FormulaSlot>
            <FormulaSlot $w={16}><I n="sum" /></FormulaSlot>
            <FormulaSlot $w={10}><Caret /></FormulaSlot>
            <FormulaSlot $w={16}><SumMark>=</SumMark></FormulaSlot>
            <FormulaInput>INSTRUÇÕES DE USO — MODELO DE PROPOSTA COMERCIAL</FormulaInput>
            <FormulaSlot $w={13}><Caret /></FormulaSlot>
          </FormulaBar>
          <SheetRow>
            <Sheet>
              <Corner />
              {columns.map((c, i) => <ColHead key={c} $on={i < 4}>{c}</ColHead>)}
              <ColHead />

              <RowHead $on>1</RowHead>
              <TitleCell>INSTRUÇÕES DE USO — MODELO DE PROPOSTA COMERCIAL<Handle /></TitleCell>
              {tail(14)}

              <RowHead>2</RowHead>
              <HeadCell />
              <HeadCell><Rich text="{SEÇÃO}" /></HeadCell>
              <HeadCell><Rich text="{ORIENTAÇÃO}" /></HeadCell>
              <HeadCell />
              {tail(14)}

              {data.map(([sec, txt, tag, color], i) => {
                const alt = i % 2 === 1;
                return (
                  <React.Fragment key={i}>
                    <RowHead>{i + 3}</RowHead>
                    <DataCell $alt={alt} $mode="num">{i + 1}.</DataCell>
                    <DataCell $alt={alt} $mode="sec" $color={TEAL}><Line><Rich text={sec} /></Line></DataCell>
                    <DataCell $alt={alt} $mode="text" $color="#2f3640">
                      {txt.map((l, j) => <Line key={j}><Rich text={l} /></Line>)}
                      {i === 4 && <Overflow />}
                    </DataCell>
                    <DataCell $alt={alt} $mode="tag" $color={color}><Line><Rich text={tag} /></Line></DataCell>
                    {tail(14)}
                  </React.Fragment>
                );
              })}

              <RowHead>21</RowHead>
              {tail(18)}
              <RowHead />
              {tail(18)}
            </Sheet>
            <VScroll><VThumb /></VScroll>
          </SheetRow>
          <HScrollRow><HThumb /><HMark /></HScrollRow>
          <TabRow>
            <TabNav>
              <NavIcon viewBox="0 0 60 12">
                <path d="M1 1v10M12 1L6 6l6 5M18 3l-5 3 5 3M24 3l-5 3 5 3M30 3l-5 3 5 3M33 3l5 3-5 3M39 3l5 3-5 3M48 1l6 5-6 5M59 1v10" fill="none" stroke="#d8d6d3" />
              </NavIcon>
            </TabNav>
            <NewTab>
              <svg width="10" height="14" viewBox="0 0 10 14"><path d="M1 1h6l2 2v10H1z" fill="#fff" stroke="#d3d1ce" /><circle cx="5" cy="7" r="2" fill="none" stroke={L} strokeWidth="1.3" /></svg>
            </NewTab>
            <Tab $w={72}>Itens_Serviços</Tab>
            <Tab $w={52}>Proposta</Tab>
            <Tab $w={49}>Resumo</Tab>
            <Tab $w={60} $on $last>Instruções</Tab>
          </TabRow>
        </Workspace>
        <Sidebar>
          <SideHandle />
          <SideItem $h={24}><I n="menu" /></SideItem>
          <SideItem $h={38}><I n="props" /></SideItem>
          <SideItem $h={20}><I n="styles" /></SideItem>
          <SideItem $h={40}><I n="gallery" /></SideItem>
          <SideItem $h={14}><I n="nav" /></SideItem>
          <SideItem $h={46}><FxText $size={17}>fx</FxText></SideItem>
        </Sidebar>
      </Middle>
      <StatusBar>
        <StatusCell $w={176} $pad={6}>
          <StatusIcon $m={9} width="12" height="12" viewBox="0 0 12 12"><path d="M1 1h8.500L11 2.500V11H1z" fill="none" stroke="#8b8987" /><path d="M3 1v3h5V1M3 11V7h6v4" fill="none" stroke="#8b8987" /></StatusIcon>
          Sheet 4 of 4
        </StatusCell>
        <StatusCell $w={220} $pad={7}>Selected: 1 row, 4 columns</StatusCell>
        <StatusCell $w={210} $pad={7}>PageStyle_Instruções</StatusCell>
        <StatusCell $w={167} $center>English (USA)</StatusCell>
        <StatusCell $w={46} />
        <StatusCell $w={32} $center>
          <svg width="22" height="12" viewBox="0 0 22 12"><rect x=".5" y="2.500" width="11" height="7" fill="#dbeaf7" stroke={L} /><path d="M15 1h4M17 1v10M15 11h4" stroke="#555" fill="none" /></svg>
        </StatusCell>
        <StatusCell $w={19} />
        <StatusCell $w={20} />
        <StatusCell $w={182} $center>Average: ; Sum: 0</StatusCell>
        <StatusCell $w={98} $center>
          <svg width="90" height="12" viewBox="0 0 90 12"><path d="M0 6h7M83 6h7M86.500 2.500v7" stroke="#444" strokeWidth="1.2" /><path d="M11 6h64" stroke="#8b8987" /><rect x="40" y="2.500" width="2.500" height="7" fill="#f6f5f4" stroke="#555" /></svg>
        </StatusCell>
        <StatusCell $w={30} $center>100%</StatusCell>
      </StatusBar>
    </Page>
  );
}
